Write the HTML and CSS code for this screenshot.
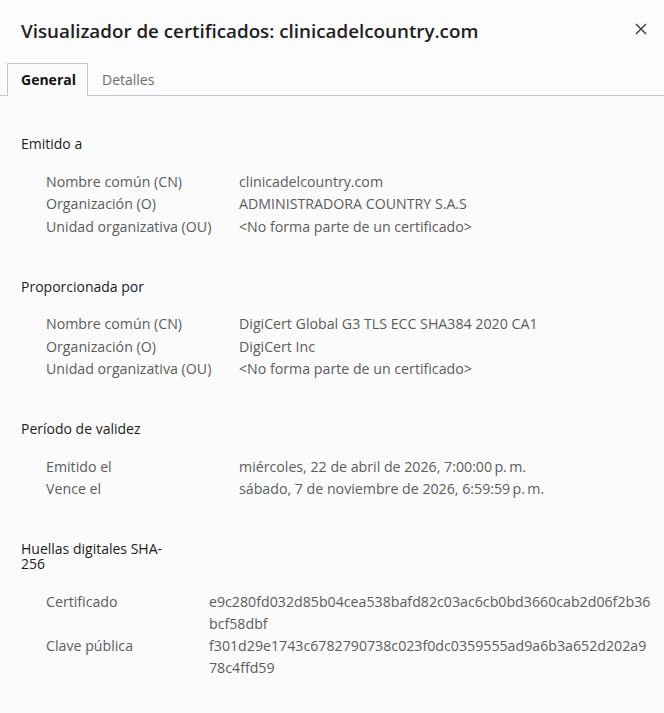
FILE: index.html
```html
<!DOCTYPE html>
<html lang="es">
<head>
<meta charset="utf-8">
<title>Visualizador de certificados</title>
<link rel="stylesheet" href="styles.css">
</head>
<body>
<div class="dialog">
  <header class="titlebar">
    <h1 class="title">Visualizador de certificados: clinicadelcountry.com</h1>
    <button class="close" aria-label="Cerrar">
      <svg width="12" height="12" viewBox="0 0 12 12"><path d="M1 1 L11 11 M11 1 L1 11" stroke="#474747" stroke-width="1.6" fill="none"/></svg>
    </button>
  </header>
  <nav class="tabs">
    <div class="tab active">General</div>
    <div class="tab">Detalles</div>
  </nav>
  <main class="content">
    <section class="section">
      <h2 class="section-title">Emitido a</h2>
      <dl class="fields">
        <dt>Nombre común (CN)</dt><dd>clinicadelcountry.com</dd>
        <dt>Organización (O)</dt><dd>ADMINISTRADORA COUNTRY S.A.S</dd>
        <dt>Unidad organizativa (OU)</dt><dd>&lt;No forma parte de un certificado&gt;</dd>
      </dl>
    </section>
    <section class="section">
      <h2 class="section-title">Proporcionada por</h2>
      <dl class="fields">
        <dt>Nombre común (CN)</dt><dd>DigiCert Global G3 TLS ECC SHA384 2020 CA1</dd>
        <dt>Organización (O)</dt><dd>DigiCert Inc</dd>
        <dt>Unidad organizativa (OU)</dt><dd>&lt;No forma parte de un certificado&gt;</dd>
      </dl>
    </section>
    <section class="section">
      <h2 class="section-title">Período de validez</h2>
      <dl class="fields">
        <dt>Emitido el</dt><dd>miércoles, 22 de abril de 2026, 7:00:00&#8201;p.&#8201;m.</dd>
        <dt>Vence el</dt><dd>sábado, 7 de noviembre de 2026, 6:59:59&#8201;p.&#8201;m.</dd>
      </dl>
    </section>
    <section class="section">
      <h2 class="section-title narrow">Huellas digitales SHA-256</h2>
      <dl class="fields hashes">
        <dt>Certificado</dt><dd>e9c280fd032d85b04cea538bafd82c03ac6cb0bd3660cab2d06f2b36bcf58dbf</dd>
        <dt>Clave pública</dt><dd>f301d29e1743c6782790738c023f0dc0359555ad9a6b3a652d202a978c4ffd59</dd>
      </dl>
    </section>
  </main>
</div>
</body>
</html>
```
FILE: styles.css
```css
html, body {
  margin: 0;
  padding: 0;
  background: #fbfbfb;
}
body {
  font-family: "Open Sans", "Noto Sans", sans-serif;
  font-size: 14.2px;
  color: #5c5c5c;
}
.dialog {
  width: 664px;
  height: 713px;
  overflow: hidden;
  background: #fbfbfb;
}
.titlebar {
  display: flex;
  align-items: center;
  justify-content: space-between;
  height: 63px;
  padding: 0 17px 0 21px;
  box-sizing: border-box;
  background: #fcfbfe;
}
.title {
  margin: 0;
  font-size: 18.8px;
  font-weight: 600;
  color: #1f1f1f;
  padding-bottom: 2px;
}
.close {
  border: 0;
  background: transparent;
  padding: 0;
  width: 12px;
  height: 12px;
  display: flex;
  margin-bottom: 6px;
}
.tabs {
  display: flex;
  padding-left: 7px;
  border-bottom: 1px solid #c6c6c6;
  background: #fcfbfe;
}
.tab {
  height: 31px;
  line-height: 31px;
  padding: 0 12px 0 13px;
  margin-bottom: -1px;
  border: 1px solid transparent;
  border-bottom: 0;
  color: #6b6b6b;
  font-size: 14px;
}
.tab.active {
  border-color: #c6c6c6;
  background: #fbfbfb;
  color: #111;
  font-weight: 700;
  height: 32px;
  padding: 0 11px 0 13px;
}
.content {
  padding: 40px 10px 0 21px;
}
.section {
  margin-bottom: 40.5px;
}
.section-title {
  margin: 0 0 19.5px 0;
  font-size: 14px;
  font-weight: 400;
  line-height: 15px;
  color: #1c1c1c;
}
.section-title.narrow {
  width: 150px;
}
.fields {
  display: grid;
  grid-template-columns: 193px 1fr;
  margin: 0 0 0 25px;
  line-height: 22.5px;
}
.fields dt, .fields dd {
  margin: 0;
}
.hashes {
  grid-template-columns: 163px 1fr;
  line-height: 22px;
}
.hashes dd {
  word-break: break-all;
}
```
